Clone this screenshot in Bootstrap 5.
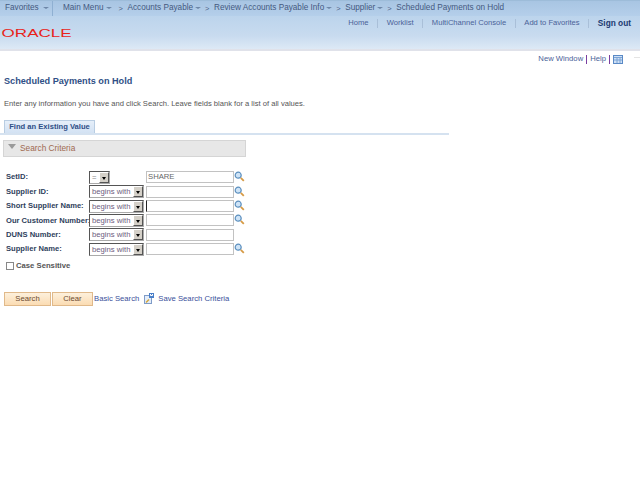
<!DOCTYPE html>
<html lang="en">
<head>
  <meta charset="UTF-8">
  <title>Scheduled Payments on Hold</title>
  <link href="https://cdn.jsdelivr.net/npm/bootstrap@5.3.3/dist/css/bootstrap.min.css" rel="stylesheet">
  <style>
    html, body { overflow: hidden; }
    body {
      font-family: "Liberation Sans", Arial, sans-serif;
      font-size: 7.7px;
      line-height: 1;
      color: #444;
      background: #fff;
    }
    a { text-decoration: none; }

    .ps-breadcrumbs {
      height: 16px;
      background: linear-gradient(#a8c5e3, #b5cfea);
      color: #44597f;
      border-top: 1px solid #9dbcd9;
      white-space: nowrap;
      font-size: 8.2px;
    }
    .ps-fav { width: 53px; padding-left: 5px; border-right: 1px solid #8fb0d2; height: 100%; }
    .ps-crumb-main { margin-left: 10px; }
    .ps-arrow { border-top: 2px solid #6d86a8; border-left: 3px solid transparent; border-right: 3px solid transparent; width: 0; height: 0; margin: -2px 4px 0 2px; }
    .ps-sep { width: 9px; color: #4d6488; font-size: 7.5px; }
    .ps-sep-first { margin-left: 3px; }

    .ps-banner {
      height: 35px;
      background: linear-gradient(#bcd4ec 0, #c8dbef 60%, #dde9f6 100%);
      border-bottom: 2px solid #e0e2ea;
    }
    .ps-logo { color: #e8231a; font-size: 10.5px; padding: 12px 0 0 1px; transform: scaleX(1.62); transform-origin: left top; font-weight: 400; }
    .ps-toplinks { padding: 3px 9px 0 0; }
    .ps-toplinks a { color: #4a6298; padding: 0 8.6px; border-right: 1px solid #a9bfd8; height: 9px; font-size: 7.6px; }
    .ps-toplinks a:last-child { border: 0; padding-right: 0; color: #1b3a70; font-weight: 700; font-size: 8.3px; }

    .ps-pagelinks { height: 14px; padding-top: 2px; color: #3f5a92; }
    .ps-pagelinks a { color: #4a6298; }
    .ps-vbar { width: 1px; height: 9px; background: #7a3fa0; margin: 0 3px; }
    .ps-fade { width: 6px; height: 1px; background: #e4e4e4; margin-left: 11px; margin-bottom: 3px; }

    .ps-title { color: #2f4f86; font-weight: 700; font-size: 9.15px; margin: 12px 0 0 4px; }
    .ps-intro { margin: 14px 0 0 4px; color: #555; font-size: 7.6px; }

    .ps-tabrow { width: 449px; margin-top: 12px; border-bottom: 2px solid #d5e2f0; height: 15px; padding-left: 4px; }
    .ps-tab {
      height: 13px; width: 91px; white-space: nowrap;
      background: linear-gradient(#e6eff9, #d3e2f3);
      border: 1px solid #b9cde2; border-bottom: 0;
      color: #2f4f86; font-weight: 700; font-size: 7.6px;
    }
    .ps-group {
      width: 243px; height: 17px; margin: 5px 0 0 3px;
      background: #e7e7e7; border: 1px solid #d5d5d5;
      color: #a06a50; font-size: 8.3px; padding-left: 4px; gap: 4px;
    }
    .ps-tri { border-top: 5px solid #9a9a9a; border-left: 4px solid transparent; border-right: 4px solid transparent; margin-top: -3px; }

    .ps-form { margin: 14px 0 0 6px; row-gap: 1.4px; display: grid; grid-template-columns: 83px 57px 88px 12px; grid-auto-rows: 13px; align-items: center; width: 240px; }
    .ps-label { color: #2f3f5c; font-weight: 700; font-size: 7.6px; white-space: nowrap; }
    .ps-select {
      height: 13px; width: 55px; line-height: 11px; white-space: nowrap;
      border: 1px solid #555; border-right-color: #aaa; border-bottom-color: #aaa;
      color: #6d5d80; background: #fff; padding-left: 2px; position: relative;
    }
    .ps-select.ps-short { width: 21px; color: #888; }
    .ps-btn-drop { position: absolute; right: 0; top: 0; bottom: 0; width: 10px; background: #d4d0c8; border: 1px solid #555; border-top-color: #fff; border-left-color: #fff; }
    .ps-btn-drop::after { content: ""; position: absolute; left: 2px; top: 4px; border-top: 3px solid #000; border-left: 2px solid transparent; border-right: 2px solid transparent; }
    .ps-input { height: 12px; width: 88px; line-height: 10px; border: 1px solid #c2c2c2; background: #fff; color: #666; padding-left: 1px; }
    .ps-caret { border-left-color: #222; }
    .ps-lens { display: block; margin-top: -1px; }

    .ps-check { margin: 6px 0 0 6px; gap: 2px; color: #555; font-weight: 700; font-size: 7.7px; }
    .ps-box { width: 8px; height: 8px; border: 1px solid #888; background: #fff; }

    .ps-actions { margin: 22px 0 0 4px; }
    .ps-action {
      height: 14px; background: linear-gradient(#fdf0dc, #fbdcb3);
      border: 1px solid #e0b98a; color: #6a4a30; font-size: 7.7px;
    }
    .ps-search { width: 47px; }
    .ps-clear { width: 41px; margin-left: 1px; }
    .ps-links { margin-left: 1px; }
    .ps-links a { color: #3a4f9a; }
    .ps-save { margin: 0 3px 0 5px; }
  </style>
</head>
<body>

<div class="ps-breadcrumbs d-flex align-items-center">
  <div class="ps-fav d-flex align-items-center">Favorites<span class="ps-arrow ms-1 me-0"></span></div>
  <span class="ps-crumb-main">Main Menu</span><span class="ps-arrow"></span>
  <span class="ps-sep ps-sep-first">&gt;</span><span>Accounts Payable</span><span class="ps-arrow"></span>
  <span class="ps-sep">&gt;</span><span>Review Accounts Payable Info</span><span class="ps-arrow"></span>
  <span class="ps-sep">&gt;</span><span>Supplier</span><span class="ps-arrow"></span>
  <span class="ps-sep">&gt;</span><span>Scheduled Payments on Hold</span>
</div>

<div class="ps-banner d-flex justify-content-between align-items-start">
  <div class="ps-logo">ORACLE</div>
  <div class="ps-toplinks d-flex align-items-center">
    <a href="#">Home</a><a href="#">Worklist</a><a href="#">MultiChannel Console</a><a href="#">Add to Favorites</a><a href="#">Sign out</a>
  </div>
</div>

<div class="ps-pagelinks d-flex justify-content-end align-items-center">
  <a href="#">New Window</a><span class="ps-vbar"></span><a href="#">Help</a><span class="ps-vbar"></span>
  <svg width="10" height="9" viewBox="0 0 10 9"><rect x=".5" y=".5" width="9" height="8" fill="#cfe0f5" stroke="#5a8ac6"/><path d="M1 2.5h8M1 5h8M4 3v5M7 3v5" stroke="#7ba4d6"/></svg>
  <span class="ps-fade"></span>
</div>

<div class="ps-title">Scheduled Payments on Hold</div>
<div class="ps-intro">Enter any information you have and click Search. Leave fields blank for a list of all values.</div>

<div class="ps-tabrow">
  <div class="ps-tab d-flex align-items-center justify-content-center">Find an Existing Value</div>
</div>

<div class="ps-group d-flex align-items-center"><span class="ps-tri"></span><span>Search Criteria</span></div>

<div class="ps-form" id="form"></div>

<div class="ps-check d-flex align-items-center"><span class="ps-box"></span><span>Case Sensitive</span></div>

<div class="ps-actions d-flex align-items-center">
  <div class="ps-action ps-search d-flex align-items-center justify-content-center">Search</div>
  <div class="ps-action ps-clear d-flex align-items-center justify-content-center">Clear</div>
  <div class="ps-links d-flex align-items-center">
    <a href="#">Basic Search</a>
    <svg class="ps-save" width="11" height="11" viewBox="0 0 11 11"><rect x=".5" y="2.5" width="7" height="8" fill="#e4edf9" stroke="#7f9cc8"/><path d="M5 0h5v5H5z" fill="#4a7fc8"/><path d="M6.5 1v1.5h2V1" stroke="#fff" fill="none"/><path d="M2 9.5l3-3" stroke="#d2a63a" stroke-width="1.4"/></svg>
    <a href="#">Save Search Criteria</a>
  </div>
</div>

<script>
  const rows = [
    ["SetID:", "=", "SHARE", true],
    ["Supplier ID:", "begins with", "", true],
    ["Short Supplier Name:", "begins with", "", true, true],
    ["Our Customer Number:", "begins with", "", true],
    ["DUNS Number:", "begins with", "", false],
    ["Supplier Name:", "begins with", "", true]
  ];
  const lens = '<svg class="ps-lens" width="11" height="11" viewBox="0 0 11 11"><circle cx="4.2" cy="4.2" r="3" fill="#cfe4f7" stroke="#5b8fbe" stroke-width="1.2"/><path d="M6.8 6.8l3 3" stroke="#d69a45" stroke-width="1.8"/></svg>';
  let html = "";
  for (const r of rows) {
    html += `<div class="ps-label">${r[0]}</div>`;
    html += `<div class="ps-select ${r[1] === "=" ? "ps-short" : ""}">${r[1]}<span class="ps-btn-drop"></span></div>`;
    html += `<div class="ps-input ${r[4] ? "ps-caret" : ""}">${r[2]}</div>`;
    html += `<div>${r[3] ? lens : ""}</div>`;
  }
  document.getElementById("form").innerHTML = html;
</script>
<script src="https://cdn.jsdelivr.net/npm/bootstrap@5.3.3/dist/js/bootstrap.bundle.min.js"></script>
</body>
</html>
